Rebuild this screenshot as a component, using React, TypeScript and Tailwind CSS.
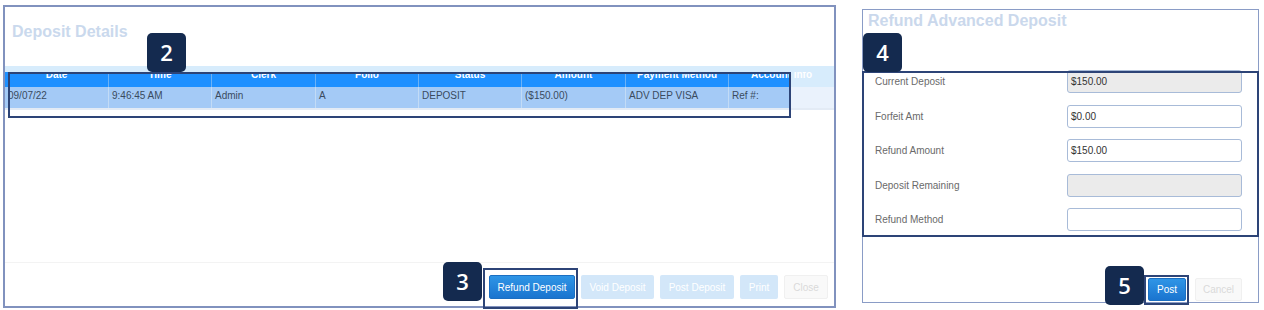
import React from 'react';

const columns = [
  { label: 'Date', value: '09/07/22', w: 'w-[104px]' },
  { label: 'Time', value: '9:46:45 AM', w: 'w-[103px]' },
  { label: 'Clerk', value: 'Admin', w: 'w-[104px]' },
  { label: 'Folio', value: 'A', w: 'w-[103px]' },
  { label: 'Status', value: 'DEPOSIT', w: 'w-[103px]' },
  { label: 'Amount', value: '($150.00)', w: 'w-[104px]' },
  { label: 'Payment Method', value: 'ADV DEP VISA', w: 'w-[103px]' },
];

const fields = [
  { label: 'Current Deposit', value: '$150.00', disabled: true },
  { label: 'Forfeit Amt', value: '$0.00', disabled: false },
  { label: 'Refund Amount', value: '$150.00', disabled: false },
  { label: 'Deposit Remaining', value: '', disabled: true },
  { label: 'Refund Method', value: '', disabled: false },
];

function Badge({ n, className }: { n: string; className: string }) {
  return (
    <div
      className={`absolute flex h-[39px] w-[39px] items-center justify-center rounded-[5px] bg-[#142a4f] font-['Open_Sans',sans-serif] text-[22px] font-semibold text-white ${className}`}
    >
      {n}
    </div>
  );
}

function Highlight({ className }: { className: string }) {
  return <div className={`pointer-events-none absolute border-2 border-[#2d4477] ${className}`} />;
}

function DepositDetails() {
  return (
    <div className="ml-[3px] mt-[5px] flex h-[303px] w-[833px] flex-col border-2 border-[#8192be] bg-white">
      <div className="pl-[7px] pt-[15px] text-[16px] font-bold leading-[20px] text-[#cad9ed]">Deposit Details</div>

      <div className="mt-[24px]">
        <div className="h-[6px] bg-[#d7ecfc]" />
        <div className="flex h-[15px] overflow-hidden bg-[#1e90ff] text-[10px] font-bold leading-[12px] text-white">
          {columns.map((c) => (
            <div key={c.label} className={`${c.w} shrink-0 border-r border-[#6cb2f7] text-center`}>
              <div className="-mt-[3px]">{c.label}</div>
            </div>
          ))}
          <div className="flex-1 bg-[linear-gradient(to_right,#1e90ff_61px,#d7ecfc_61px)] text-center">
            <div className="-mt-[3px]">Account Info</div>
          </div>
        </div>
        <div className="flex h-[21px] bg-[#a4caf6] text-[10px] leading-[12px] text-[#3a4a5e]">
          {columns.map((c) => (
            <div key={c.label} className={`${c.w} shrink-0 border-r border-[#c2dbf6] pl-[3px] pt-[3px]`}>
              {c.value}
            </div>
          ))}
          <div className="flex-1 bg-[linear-gradient(to_right,#a4caf6_61px,#eaf2fc_61px)] pl-[3px] pt-[3px]">Ref #:</div>
        </div>
        <div className="h-[2px] bg-[#e3ebf5]" />
      </div>

      <div className="mt-auto flex justify-end gap-[6px] border-t border-[#f3f3f3] pb-[7px] pr-[6px] pt-[12px] text-[10px]">
        <button className="h-[24px] w-[86px] rounded-[2px] border border-[#1b6fc2] bg-[linear-gradient(#2f95e6,#1a74cf)] text-white">
          Refund Deposit
        </button>
        <button className="h-[24px] w-[73px] rounded-[2px] bg-[#d3e7f9] text-white">Void Deposit</button>
        <button className="h-[24px] w-[74px] rounded-[2px] bg-[#d3e7f9] text-white">Post Deposit</button>
        <button className="h-[24px] w-[38px] rounded-[2px] bg-[#d3e7f9] text-white">Print</button>
        <button className="h-[24px] w-[44px] rounded-[2px] border border-[#f0f0f0] bg-[#f9f9f9] text-[#d9d9d9]">Close</button>
      </div>
    </div>
  );
}

function RefundAdvancedDeposit() {
  return (
    <div className="ml-[26px] mt-[9px] flex h-[294px] w-[397px] flex-col border border-[#8a9cc6] bg-white">
      <div className="pl-[5px] pt-[1px] text-[16px] font-bold leading-[20px] text-[#cad8ec]">Refund Advanced Deposit</div>

      <div className="mt-[39px] flex flex-col gap-[11.5px]">
        {fields.map((f) => (
          <div key={f.label} className="flex h-[23px] items-center">
            <div className="w-[204px] pl-[12px] text-[10px] text-[#6a6a6a]">{f.label}</div>
            <div
              className={`flex h-[23px] w-[175px] items-center rounded-[3px] border-[1.5px] border-[#a8bbd8] pl-[3px] text-[10px] text-[#333] ${
                f.disabled ? 'bg-[#ebebeb]' : 'bg-white'
              }`}
            >
              {f.value}
            </div>
          </div>
        ))}
      </div>

      <div className="mt-auto flex justify-end gap-[9px] pb-[1px] pr-[16px] text-[10px]">
        <button className="h-[23px] w-[38px] rounded-[2px] border border-[#1b6fc2] bg-[linear-gradient(#2f95e6,#1a74cf)] text-white">
          Post
        </button>
        <button className="h-[23px] w-[47px] rounded-[2px] border border-[#f0f0f0] bg-[#f9f9f9] text-[#dadada]">Cancel</button>
      </div>
    </div>
  );
}

export default function App() {
  return (
    <div className="relative flex h-[310px] w-[1264px] items-start bg-white font-['Liberation_Sans',Arial,sans-serif]">
      <DepositDetails />
      <RefundAdvancedDeposit />

      <Highlight className="left-[8px] top-[72px] h-[46px] w-[783px]" />
      <Highlight className="left-[483px] top-[268px] h-[41px] w-[95px]" />
      <Highlight className="left-[862px] top-[71px] h-[166px] w-[397px]" />
      <Highlight className="left-[1144px] top-[275px] h-[30px] w-[45px]" />

      <Badge n="2" className="left-[147px] top-[33px]" />
      <Badge n="3" className="left-[443px] top-[262px]" />
      <Badge n="4" className="left-[863px] top-[33px]" />
      <Badge n="5" className="left-[1105px] top-[266px]" />
    </div>
  );
}
